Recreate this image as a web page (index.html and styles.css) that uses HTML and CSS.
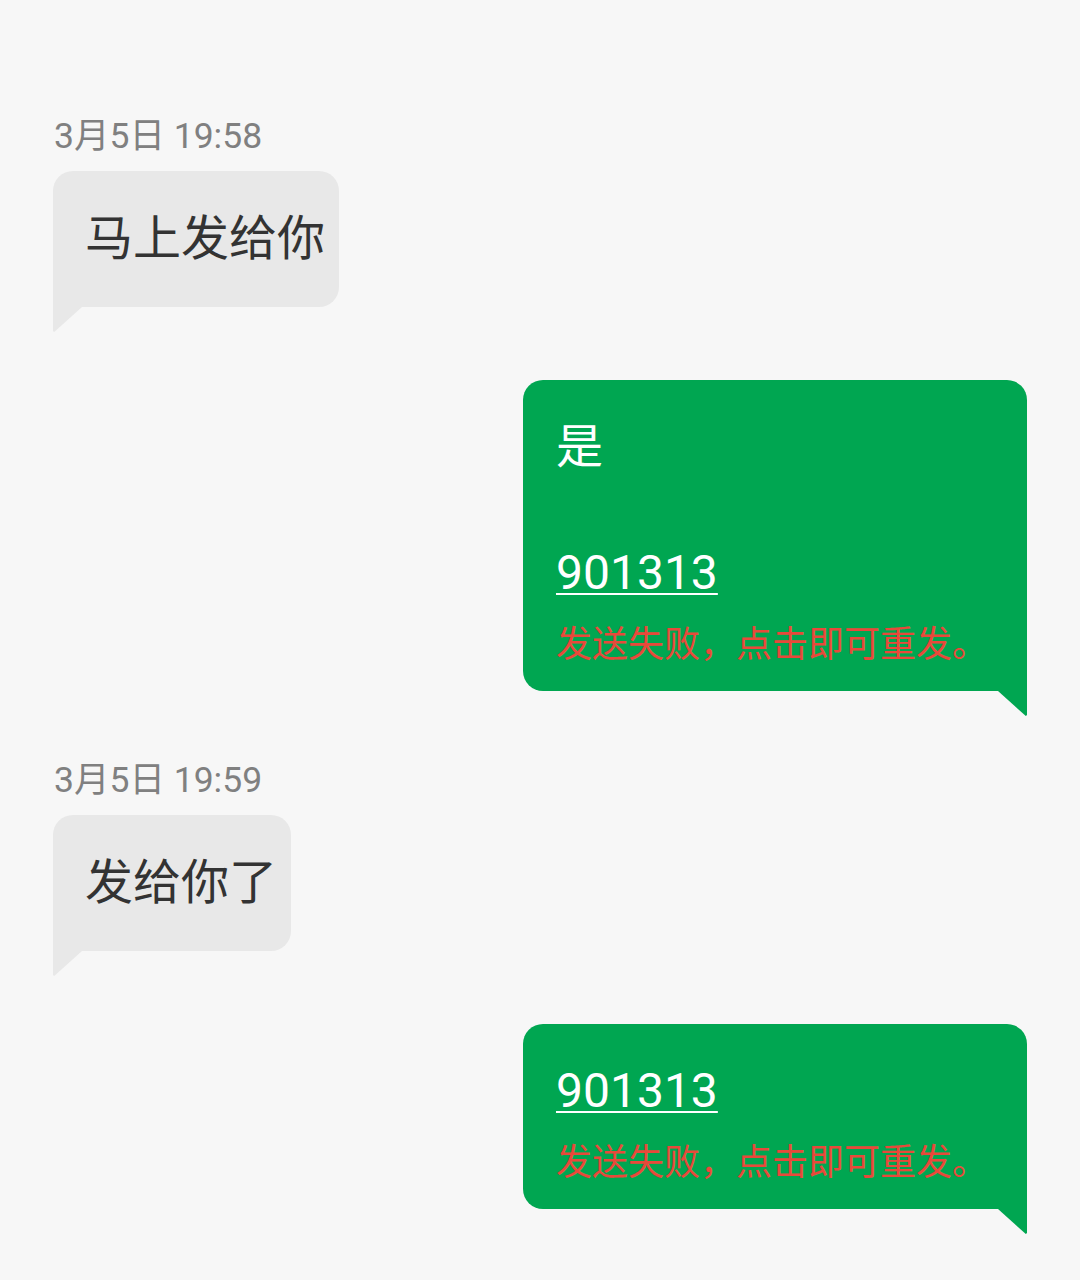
FILE: index.html
```html
<!DOCTYPE html>
<html>
<head>
    <title>短信</title>
    <link rel="stylesheet" href="styles.css">
</head>

<body>
    <div class="thread">
        <div class="time">3月5日 19:58</div>
        <div class="msg in">
            <div class="bubble">马上发给你</div>
        </div>

        <div class="msg out">
            <div class="bubble">
                <div class="line">是</div>
                <div class="line">&nbsp;</div>
                <div class="line"><span class="code">901313</span></div>
                <div class="fail">发送失败，点击即可重发。</div>
            </div>
        </div>

        <div class="time">3月5日 19:59</div>
        <div class="msg in">
            <div class="bubble">发给你了</div>
        </div>

        <div class="msg out">
            <div class="bubble">
                <div class="line"><span class="code">901313</span></div>
                <div class="fail">发送失败，点击即可重发。</div>
            </div>
        </div>
    </div>
</body>

</html>
```

FILE: styles.css
```css
body {
    margin: 0;
    background: #f7f7f7;
    font-family: Roboto, "Noto Sans CJK SC", sans-serif;
}

.thread {
    padding: 115px 53px 60px 53px;
    display: flex;
    flex-direction: column;
}

.time {
    font-size: 35.5px;
    line-height: 42px;
    color: #808080;
    margin-bottom: 14px;
    padding-left: 1px;
}

.msg {
    display: flex;
}

.msg.in {
    justify-content: flex-start;
    margin-bottom: 73px;
}

.msg.out {
    justify-content: flex-end;
    margin-bottom: 68px;
}

.bubble {
    position: relative;
    font-size: 47px;
    line-height: 63px;
}

.in .bubble {
    background: #e8e8e8;
    color: #333333;
    font-size: 48px;
    padding: 36px 14px 37px 32px;
    border-radius: 20px 20px 20px 0;
}

.out .bubble {
    background: #00a651;
    color: #ffffff;
    padding: 35px 39px 25px 33px;
    border-radius: 20px 20px 0 20px;
}

.bubble::after {
    content: "";
    position: absolute;
    top: 100%;
    width: 29px;
    height: 25px;
}

.in .bubble::after {
    left: 0;
    background: #e8e8e8;
    clip-path: polygon(0 0, 100% 0, 8% 96%, 4% 100%, 0 96%);
}

.out .bubble::after {
    right: 0;
    background: #00a651;
    clip-path: polygon(0 0, 100% 0, 100% 96%, 96% 100%, 92% 96%);
}

.code {
    font-size: 48px;
    text-decoration: underline;
    text-decoration-thickness: 2px;
    text-underline-offset: 4px;
}

.fail {
    margin-top: 12px;
    font-family: "Noto Sans CJK SC", sans-serif;
    font-size: 36px;
    line-height: 50px;
    color: #e8493a;
}
```
